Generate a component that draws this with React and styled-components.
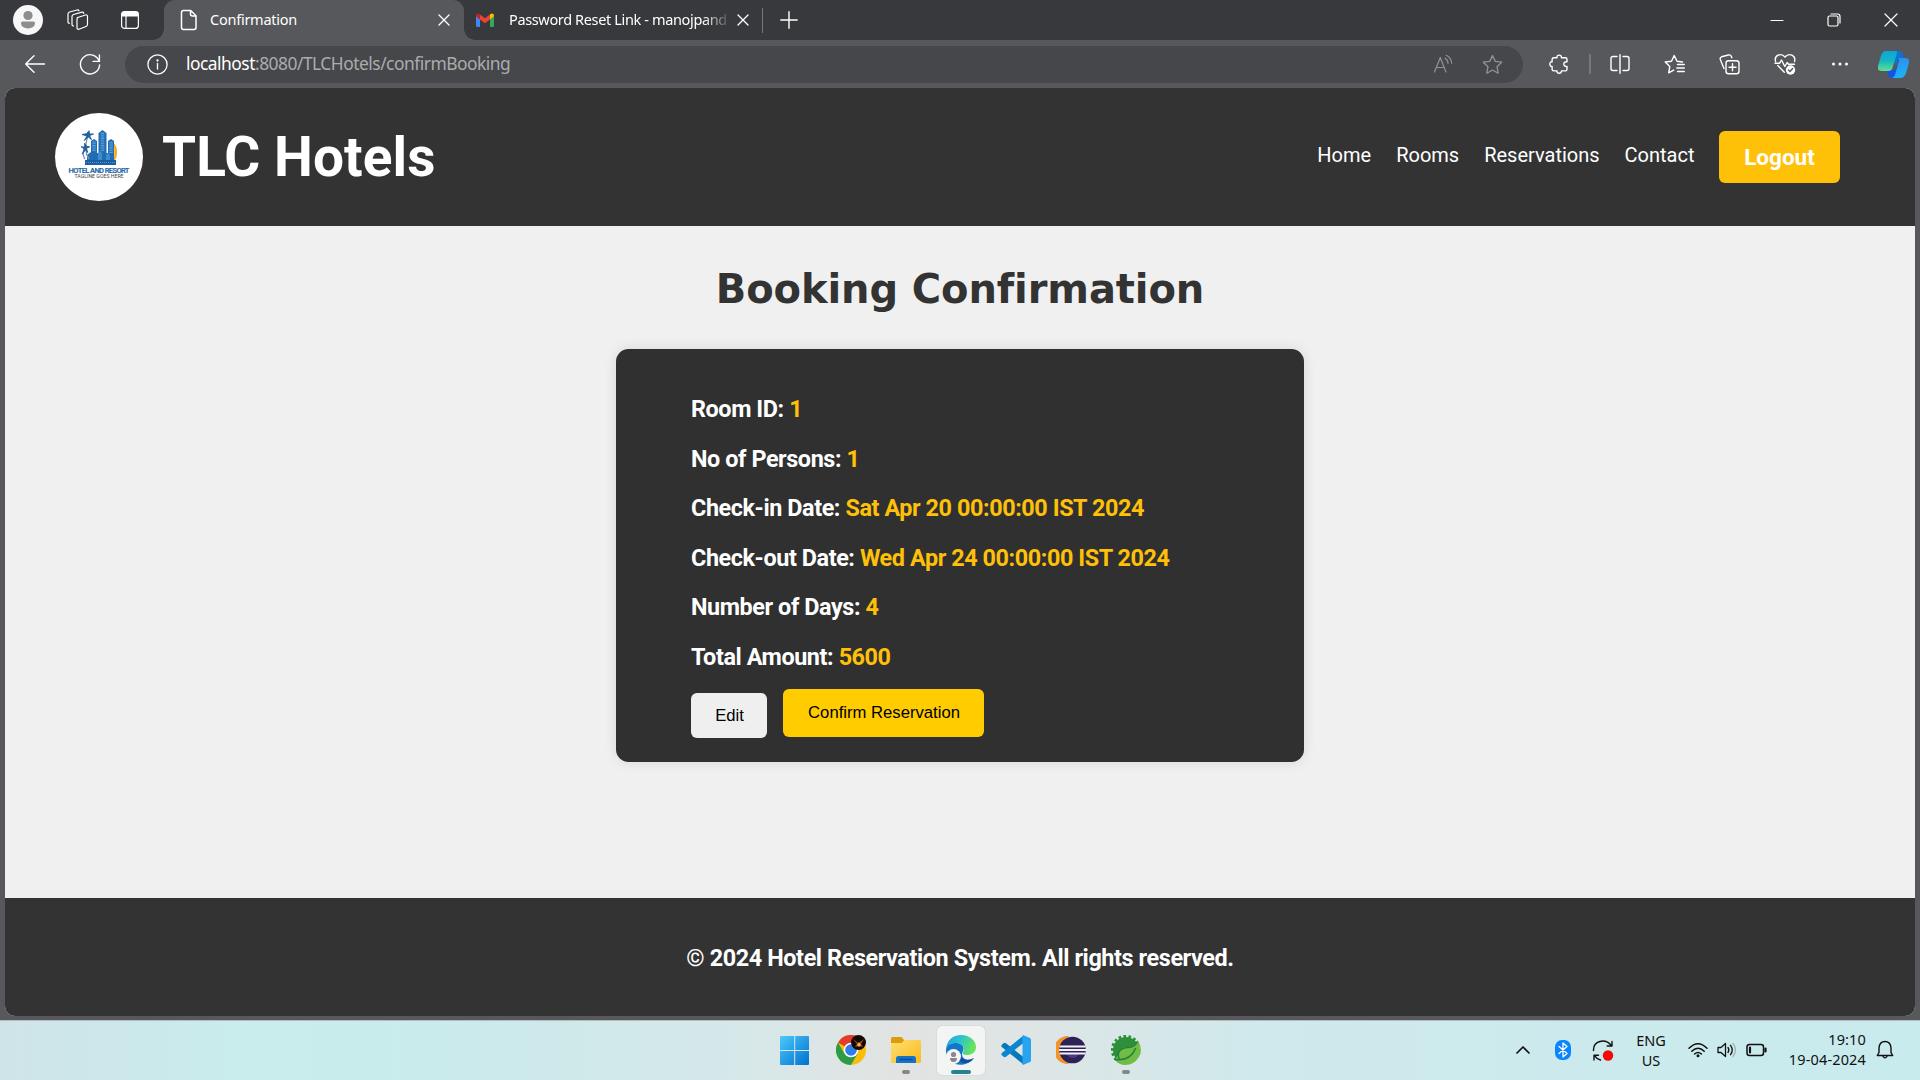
import React from "react";
import styled, { createGlobalStyle, css } from "styled-components";

const ui = `"Noto Sans", "Open Sans", sans-serif`;

const GlobalStyle = createGlobalStyle`
  * { box-sizing: border-box; }
  html, body { margin: 0; padding: 0; background: #57585c; }
  button { font: inherit; border: 0; padding: 0; }
`;

const Screen = styled.div`
  width: 1920px;
  height: 1080px;
  display: flex;
  flex-direction: column;
  overflow: hidden;
  background: #57585c;
  font-family: ${ui};
`;

/* ---------- browser tab strip ---------- */
const TabStrip = styled.div`
  height: 40px;
  flex: none;
  display: flex;
  background: #38393c;
  color: #fff;
`;
const StripTools = styled.div`
  width: 164px;
  display: flex;
  align-items: center;
  padding-left: 13px;
  gap: 24px;
`;
const Tab = styled.div`
  display: flex;
  align-items: center;
  height: 40px;
  font-size: 14.5px;
  letter-spacing: -0.25px;
  ${(p) =>
    p.$active
      ? css`
          width: 300px;
          padding: 0 11px 0 16px;
          background: #57585c;
          border-radius: 11px 11px 0 0;
          position: relative;
          &::before,
          &::after {
            content: "";
            position: absolute;
            bottom: 0;
            width: 11px;
            height: 11px;
          }
          &::before {
            left: -11px;
            background: radial-gradient(circle at 0 0, #38393c 10.5px, #57585c 11px);
          }
          &::after {
            right: -11px;
            background: radial-gradient(circle at 100% 0, #38393c 10.5px, #57585c 11px);
          }
        `
      : css`
          width: 298px;
          padding: 0 10px 0 12px;
        `}
`;
const TabTitle = styled.span`
  flex: 1;
  white-space: nowrap;
  line-height: 24px;
  margin-top: -3px;
  ${(p) =>
    p.$fade &&
    css`
      letter-spacing: -0.36px;
      mask-image: linear-gradient(90deg, #000 86%, transparent 99%);
    `}
`;
const TabIcon = styled.span`
  display: flex;
  width: ${(p) => p.$width}px;
  margin-left: ${(p) => p.$left || 0}px;
  flex: none;
`;
const TabClose = styled.span`
  width: 18px;
  height: 18px;
  display: flex;
  flex: none;
`;
const StripDivider = styled.i`
  width: 1px;
  height: 25px;
  margin: 8px 0 0;
  background: #77787b;
`;
const NewTab = styled.span`
  display: flex;
  align-items: center;
  margin-left: 17px;
`;
const WindowControls = styled.div`
  margin-left: auto;
  display: flex;
  align-items: center;
  gap: 43px;
  padding-right: 22px;
`;

/* ---------- address row ---------- */
const Toolbar = styled.div`
  height: 48px;
  flex: none;
  display: flex;
  align-items: center;
  background: #57585c;
  color: #fff;
`;
const NavButtons = styled.div`
  width: 125px;
  display: flex;
  align-items: center;
  padding-left: 24px;
  gap: 33px;
`;
const AddressBar = styled.div`
  width: 1398px;
  height: 37px;
  display: flex;
  align-items: center;
  padding: 0 20px 0 22px;
  border-radius: 19px;
  background: #46474a;
`;
const Url = styled.div`
  flex: 1;
  margin: -3px 0 0 18px;
  font-size: 17.4px;
  line-height: 26px;
  letter-spacing: -0.5px;
  color: #abacae;
  b { font-weight: 400; color: #fff; }
`;
const AddressActions = styled.div`
  display: flex;
  gap: 28px;
  color: #929395;
`;
const ToolbarActions = styled.div`
  flex: 1;
  display: flex;
  align-items: center;
  padding: 0 11px 0 26px;
`;
const ToolDivider = styled.i`
  width: 2px;
  height: 20px;
  margin: 0 1px 0 20px;
  background: #77787b;
`;
const ToolButton = styled.span`
  width: 55px;
  display: flex;
  justify-content: center;
`;
const CopilotButton = styled.span`
  display: flex;
  margin-left: auto;
`;

/* ---------- hotel page ---------- */
const Viewport = styled.div`
  width: 1910px;
  height: 928px;
  margin: 0 5px;
  flex: none;
  display: flex;
  flex-direction: column;
  overflow: hidden;
  border-radius: 10px;
  background: #f0f0f0;
  font-family: Roboto, sans-serif;
`;
const Header = styled.header`
  height: 138px;
  flex: none;
  display: flex;
  align-items: center;
  padding: 0 75px 0 50px;
  background: #333;
  color: #fff;
`;
const Logo = styled.div`
  width: 88px;
  height: 88px;
  border-radius: 50%;
  background: #fff;
`;
const Brand = styled.h1`
  margin: 0 auto 0 19px;
  font-size: 55px;
  line-height: 64px;
  font-weight: 700;
  letter-spacing: 0.08px;
`;
const Nav = styled.nav`
  display: flex;
  align-items: center;
  gap: 25px;
`;
const NavLink = styled.a`
  font-size: 20px;
  line-height: 24px;
  margin-top: -4px;
`;
const LogoutButton = styled.button`
  width: 121px;
  height: 52px;
  margin-left: -0.5px;
  border-radius: 6px;
  background: #ffc107;
  color: #fff;
  font-size: 22.5px;
  font-weight: 700;
`;
const Main = styled.main`
  height: 672px;
  flex: none;
  display: flex;
  flex-direction: column;
  align-items: center;
  padding-top: 39px;
`;
const PageTitle = styled.h2`
  margin: 0;
  font-family: "DejaVu Sans", Verdana, sans-serif;
  font-size: 40px;
  line-height: 49px;
  font-weight: 700;
  font-variant-ligatures: none;
  letter-spacing: -0.1px;
  color: #333;
`;
const Card = styled.section`
  width: 688px;
  height: 413px;
  margin-top: 35px;
  padding: 36px 75px 0;
  border-radius: 12.5px;
  background: #303030;
  box-shadow: 0 0 13px rgba(0, 0, 0, 0.1);
`;
const Detail = styled.h3`
  margin: 0;
  height: 49.6px;
  font-size: 23.4px;
  line-height: 49.6px;
  font-weight: 700;
  color: #fff;
  white-space: pre;
  letter-spacing: -0.42px;
  span { color: #ffc107; }
`;
const Actions = styled.div`
  display: flex;
  gap: 16px;
  margin-top: 6px;
`;
const ActionButton = styled.button`
  width: ${(p) => (p.$primary ? 201 : 76)}px;
  height: ${(p) => (p.$primary ? 48 : 45)}px;
  margin-top: ${(p) => (p.$primary ? 0 : 4)}px;
  padding: ${(p) => (p.$primary ? "0 0 0 1px" : "1px 0 0 1px")};
  border-radius: 6px;
  background: ${(p) => (p.$primary ? "#ffcc00" : "#efefef")};
  color: #000;
  font-family: "Liberation Sans", Arial, sans-serif;
  font-size: 16.67px;
`;
const Footer = styled.footer`
  flex: 1;
  display: flex;
  align-items: center;
  justify-content: center;
  background: #333;
  color: #fff;
  font-size: 23.4px;
  font-weight: 700;
  letter-spacing: -0.4px;
  padding-top: 2px;
`;

/* ---------- taskbar ---------- */
const Taskbar = styled.div`
  height: 60px;
  margin-top: 4px;
  flex: none;
  display: grid;
  grid-template-columns: 1fr auto 1fr;
  align-items: center;
  border-top: 1px solid #b5babd;
  background: linear-gradient(90deg, #cfe4e8 0, #c9ecec 240px, #c8ecec 380px, #cde9eb 520px, #d6e8e9 740px, #e2e3e2 900px, #dfe5e5 1020px, #cfe9ec 1260px, #c8ebed 100%);
`;
const Apps = styled.div`
  grid-column: 2;
  display: flex;
  gap: 7px;
  margin: 0 -1px 0 1px;
`;
const AppSlot = styled.div`
  width: 48px;
  height: 49px;
  display: flex;
  flex-direction: column;
  align-items: center;
  padding-top: 9px;
  padding-right: ${(p) => p.$nudge || 0}px;
  border-radius: 5px;
  background: ${(p) => (p.$active ? "rgba(255,255,255,.6)" : "transparent")};
  box-shadow: ${(p) => (p.$active ? "0 0 1px rgba(0,0,0,.3)" : "none")};
`;
const Running = styled.i`
  width: ${(p) => (p.$active ? 20 : 8)}px;
  height: 4px;
  margin-top: 5px;
  border-radius: 2px;
  background: ${(p) => (p.$active ? "#27818f" : "#858888")};
`;
const Tray = styled.div`
  justify-self: end;
  display: flex;
  align-items: center;
  padding: 0 26px 1px 0;
  color: #111;
  font-size: 14.5px;
  line-height: 20px;
`;
const Language = styled.div`
  width: 40px;
  margin: -1px 0 0 17px;
  text-align: center;
`;
const Status = styled.div`
  display: flex;
  align-items: center;
  gap: 9px;
  margin-left: 17px;
`;
const Clock = styled.div`
  width: 90px;
  margin: -3px 0 0 9px;
  text-align: right;
  white-space: nowrap;
  letter-spacing: 0.15px;
`;
const TrayItem = styled.span`
  display: flex;
  margin-left: ${(p) => p.$left}px;
`;

/* ---------- drawings ---------- */
const Icon = ({ w = 20, h = w, box = `0 0 ${w} ${h}`, stroke = 1.2, children }) => (
  <svg width={w} height={h} viewBox={box} fill="none" stroke="currentColor" strokeWidth={stroke} strokeLinecap="round" strokeLinejoin="round">
    {children}
  </svg>
);
const CloseIcon = ({ w = 18, a = 4, stroke = 1.3 }) => (
  <Icon w={w} stroke={stroke}><path d={`M${a} ${a} ${w - a} ${w - a}M${w - a} ${a} ${a} ${w - a}`} /></Icon>
);
const ProfileIcon = () => (
  <Icon w={30}><g stroke="none"><circle cx="15" cy="15" r="15" fill="#f7f7f7" /><circle cx="15" cy="10.500" r="4.600" fill="#8d8d8d" /><path d="M9.500 16.500h11q1.500 0 1.500 1.600c0 3.400-3 5.300-7 5.300s-7-1.900-7-5.300q0-1.600 1.500-1.600z" fill="#8d8d8d" /></g></Icon>
);
const WorkspacesIcon = () => (
  <Icon w={22}><path d="m11.500 8.200 7-2.200q2-.5 2 1.500v8q0 1.500-1.500 2l-7 2.700q-2 .5-2-1.500V10q0-1.400 1.500-1.800z" /><path d="M6.500 16.800q-1.500.4-1.500-1.500V7.500q0-1.500 1.500-2l8.500-2.400q1.500-.3 1.700 1.200" /><path d="M2.500 14.200Q1 14.500 1 13V5q0-1.500 1.500-2L10 1q1.500-.4 2 .8" /></Icon>
);
const VerticalTabsIcon = () => (
  <Icon w={20}><rect x="1.600" y="1.600" width="16.800" height="16.800" rx="3" /><path d="M2 3.500Q2 2 3.500 2h13Q18 2 18 3.500V6H2z" fill="#fff" /><path d="M6 6v12" /></Icon>
);
const PageIcon = () => (
  <Icon w={18} h={22} stroke={1.5}><path d="M3.500 1.500h7.200l5.300 5.300v11.700q0 2-2 2H3.500q-2 0-2-2v-15q0-2 2-2zM10.500 1.800V5q0 2 2 2h3.300" /></Icon>
);
const GmailIcon = () => (
  <Icon w={18} h={14}><g stroke="none"><path d="M0 3v9.500Q0 14 1.500 14H4V6z" fill="#4285f4" /><path d="M18 3v9.500q0 1.500-1.500 1.500H14V6z" fill="#34a853" /><path d="M4 1.500 9 5.300l5-3.800v5L9 10.300 4 6.500z" fill="#ea4335" /><path d="M0 3v.3l4 3.200v-5C2.300-.2 0 .3 0 3z" fill="#c5221f" /><path d="M18 3v.3l-4 3.200v-5C15.700-.2 18 .3 18 3z" fill="#fbbc04" /></g></Icon>
);
const BackIcon = () => <Icon w={22} stroke={1.4}><path d="M20.500 11H2M10 2.800 1.700 11l8.300 8.200" /></Icon>;
const ReloadIcon = () => <Icon w={22} stroke={1.4}><path d="M20.200 8.500A9.600 9.600 0 1 0 20.600 12M20.400 2v6.400h-6.300" /></Icon>;
const InfoIcon = () => <Icon w={21} stroke={1.3}><circle cx="10.500" cy="10.500" r="9.600" /><path d="M10.500 9.500v5.500" /><circle cx="10.500" cy="6.500" r=".5" fill="#fff" /></Icon>;
const ReadAloudIcon = () => <Icon w={21}><path d="M1.500 18 7.300 3.500 13 18M3.300 13.500h8M12 4.300q3 1.700 3 5M13.200 1.200q5 2.300 5.500 8" /></Icon>;
const star = "m10.500 1.500 2.800 5.900 6.400.8-4.700 4.500 1.200 6.500-5.700-3.200-5.700 3.200L6 12.700 1.300 8.200l6.400-.8z";
const StarIcon = () => <Icon w={21} stroke={1.3}><path d={star} /></Icon>;
const PuzzleIcon = () => (
  <Icon w={20} stroke={1.4}><path d="M4.800 3.800H8C7.300.2 13 .2 12.400 3.800h3.900q1.700 0 1.700 1.700v2.300c-4.300-.6-4.300 5.200 0 4.600v2.800q0 1.700-1.700 1.700h-3.900c.6 3.100-5.100 3.100-4.400 0H4.800q-1.700 0-1.700-1.700v-2.800C.1 13 .1 7.200 3.100 7.800V5.500q0-1.700 1.700-1.700z" /></Icon>
);
const SplitIcon = () => <Icon w={20} stroke={1.4}><path d="M7 2.500H3q-2 0-2 2v10q0 2 2 2h4M13 2.500h4q2 0 2 2v10q0 2-2 2h-4M10 .8v18.400" /></Icon>;
const FavoritesIcon = () => <Icon w={21} stroke={1.4}><path d="M18.500 8 13 7.300 10.200 1.500 7.500 7.300 1.200 8l4.600 4.400-1.100 6.500 5-2.800M13.500 10.500h6.800M12.800 14h7.500M13.500 17.500h6.800" /></Icon>;
const CollectionsIcon = () => <Icon w={21} stroke={1.4}><rect x="7" y="6.800" width="13" height="13" rx="2.500" /><path d="M13.500 9.800v7M10 13.300h7M5 14.500 1.300 5.500Q.7 3.500 2.500 2.800L9.500 1q2-.5 2.800 1.300l.5 1.500" /></Icon>;
const HeartIcon = () => (
  <Icon w={22} stroke={1.4}><path d="M1.600 8.500C-.2 2.500 7-.8 11 4c4-4.800 11.200-1.500 9.500 4.500M3.800 12.500l6.500 6.700M1 10.300h4.500l2-3.300 3.300 6.500 2.400-4 1.300 1.800h6" /><circle cx="16.500" cy="17" r="4.700" fill="#fff" stroke="none" /><path d="m14.500 17 1.500 1.500 2.600-3" stroke="#57585c" /></Icon>
);
const MoreIcon = () => <Icon w={18}><g fill="currentColor" stroke="none"><circle cx="2.500" cy="9" r="1.500" /><circle cx="9" cy="9" r="1.500" /><circle cx="15.500" cy="9" r="1.500" /></g></Icon>;
const CopilotIcon = () => (
  <Icon w={31} h={28}>
    <defs>
      <linearGradient id="cpA" x1="0" y1="0" x2="0" y2="1"><stop offset="0" stopColor="#0da4dc" /><stop offset=".5" stopColor="#16b7c0" /><stop offset="1" stopColor="#63e08b" /></linearGradient>
      <linearGradient id="cpB" x1="0" y1="0" x2="0" y2="1"><stop offset="0" stopColor="#2e8ff0" /><stop offset="1" stopColor="#18b6fb" /></linearGradient>
    </defs>
    <g stroke="none">
      <path d="M10 1h11q3 0 4 4l1 3h-5l-3 8z" fill="#0b74cf" /><path d="M8 20h9l2-5 3 13h-8q-3 0-4-3z" fill="#1b52e0" />
      <path d="M8 1h9.500q2 0 1.500 2l-4.500 15q-1 3-4 3H4q-5 0-4-5l3-10Q4.500 1 8 1z" fill="url(#cpA)" />
      <path d="M20 8h7q5 0 4 5l-3 10q-1.500 5-6 5h-8q2.500-1 3-3l4-14q.5-2-1-3z" fill="url(#cpB)" />
    </g>
  </Icon>
);
const LogoText = styled.text`
  font-family: "Roboto", sans-serif;
  font-weight: ${(p) => (p.$small ? 400 : 500)};
  font-size: ${(p) => (p.$small ? 5.2 : 7.5)}px;
  letter-spacing: ${(p) => (p.$small ? 0 : -0.6)}px;
`;
const HotelLogo = () => (
  <svg width="88" height="88" viewBox="0 0 88 88">
    <path d="M58 29q4.500 4.500 4 11 0 4-2 7h-3z" fill="#f5a623" /><path d="M58 28q3 8 1 19h-2z" fill="#ffd43b" />
    <path d="M32 51V42l4-3V28l3-2 3 2v12h1.500V20l4-3 4 3v20H53V28l3-2 3 2v23z" fill="#1f6db4" />
    <path d="M39 38V28M47.500 38V19M56 40V28" stroke="#5c9fd8" strokeWidth="3.500" strokeDasharray="1 .7" />
    <path d="M43 48v-8l2-2 2 2v8M51 48v-6l2-2 2 2v6" fill="#3d8ccc" />
    <path d="M30 47h31v5H30z" fill="#1b5ea6" /><path d="M31 49.500h29" stroke="#6ea2d2" strokeWidth=".8" strokeDasharray="1 1" />
    <path d="M34 46q-6-8-1-24M30 46q-3-4-1-10" stroke="#7c95b5" strokeWidth="1.300" fill="none" />
    <path d="m32 23-5-1.500 4.500-.8 2.500-3 .5 3.200 4 .1-4 1.600 2 4-3.300-2.700-4 3.600zM29.500 36l-3.500-2.300 3.500.5.200-4 2 3.400 3 .2-3.300 1.700 1.500 4-2.500-2.400-3.200 4z" fill="#1e5f9f" stroke="#1e5f9f" strokeWidth=".9" />
    <LogoText x="43.700" y="59.500" textAnchor="middle" stroke="#1b64a8" strokeWidth=".2" fill="#1b64a8">HOTEL AND RESORT</LogoText>
    <LogoText $small x="44" y="64.800" textAnchor="middle" fill="#444">TAGLINE GOES HERE</LogoText>
  </svg>
);

const WindowsIcon = () => (
  <Icon w={30}><defs><linearGradient id="win" x1="0" y1="0" x2="1" y2="1"><stop stopColor="#4cc9fb" /><stop offset="1" stopColor="#0070d0" /></linearGradient></defs><path stroke="none" fill="url(#win)" d="M1 1H14.200v14H0V2q0-1 1-1zM15.200 1H28q1 0 1 1v13H15.200zM0 16h14.200v14H1q-1 0-1-1zM15.200 16H29v13q0 1-1 1H15.200z" /></Icon>
);
const ChromeIcon = () => (
  <Icon w={30}><g stroke="none"><circle cx="15" cy="15" r="15" fill="#fbbd0a" /><path d="M15 15 2 7.500A15 15 0 0 1 28 7.500H15z" fill="#e33b2e" /><path d="M2 7.500A15 15 0 0 0 15 30l6.500-11.300L15 15 8.500 18.700z" fill="#2a9d48" /><circle cx="15" cy="15" r="7.300" fill="#fff" /><circle cx="15" cy="15" r="5.800" fill="#2f7de9" /><circle cx="22.500" cy="7.500" r="7.500" fill="#160806" /><path d="m17 4 4 5-2 3 4-1 4 1-2-3 3-5-4 3-1 2-2-2z" fill="#a64a1c" /><path d="m21 10 2-3 2 3-2 2z" fill="#f0b35b" /></g></Icon>
);
const FolderIcon = () => (
  <Icon w={30}><defs><linearGradient id="fold" x1="0" y1="0" x2="1" y2="1"><stop stopColor="#ffdf72" /><stop offset="1" stopColor="#fbb91d" /></linearGradient></defs><g stroke="none"><path d="M0 3.500Q0 2 1.500 2h9L13 5v5H0z" fill="#dc9b08" /><path d="M0 8h10.500L13.500 5H28.500Q30 5 30 6.500V26.500Q30 28 28.500 28h-27Q0 28 0 26.500z" fill="url(#fold)" /><path d="M5 28v-4.500Q5 21 7.500 21h15q2.500 0 2.500 2.500V28z" fill="#1473c8" /><path d="M9 24.500h12" stroke="#0b4f92" strokeWidth="1.300" /></g></Icon>
);
const EdgeIcon = () => (
  <Icon w={31} h={30}>
    <defs><linearGradient id="edA" x1="0" y1="0" x2="1" y2=".3"><stop stopColor="#1da3dc" /><stop offset=".5" stopColor="#2cc3cf" /><stop offset="1" stopColor="#66e45c" /></linearGradient></defs>
    <g stroke="none">
      <path d="M0 16q0-9 10-8c6 0 9 4 7 8-3 6 2 10 9 9-8 9-26 5-26-9z" fill="#1276c9" />
      <path d="M11 18q-1 9 8 10 6 0 9-5-6 3-10 1-4-2-3-6z" fill="#124f9d" />
      <path d="M0 14C1 5 7 0 15 0c9 0 15 6 15 12 0 6-5 8-9 8-3 0-5-1-4-3 3-3 0-8-6-9-6 0-10 2-11 6z" fill="url(#edA)" />
      <circle cx="7.500" cy="21.500" r="7.500" fill="#f5f5f5" /><circle cx="7.500" cy="19.500" r="2.600" fill="#888" /><path d="M4 23h7q0 4-3.500 4T4 23z" fill="#888" />
    </g>
  </Icon>
);
const CodeIcon = () => (
  <Icon w={30}><g stroke="none"><path d="M1 9.500 3 8q1-.5 2 .3L22.500 22v7.500L.8 12q-1-1.200.2-2.500z" fill="#0878bd" /><path d="M1 20.500 3 22q1 .5 2-.3L22.500 8V.5L.8 18q-1 1.200.2 2.500z" fill="#0b86d0" /><path d="M22 0l7 3q1 .5 1 1.500v21q0 1-1 1.500l-7 3q-1-1-.5-2.500v-25Q21.500.5 22 0z" fill="#27a3f0" /></g></Icon>
);
const EclipseIcon = () => (
  <Icon w={30}><g stroke="none"><path d="M12 1.500a13.500 13.500 0 0 0 0 27A16 16 0 0 1 12 1.500z" fill="#f59324" stroke="#f59324" /><circle cx="16.500" cy="15" r="13.300" fill="#2c2255" /><path d="M10 18h13q-2 5-6.500 5T10 18z" fill="#4b3a85" /><path d="M3.500 10.500h26v2h-26zM3 14h27v2H3zM3.500 17.500h26v2h-26z" fill="#f3f1f7" /></g></Icon>
);
const SpringIcon = () => (
  <Icon w={30}>
    <g stroke="none">
      <circle cx="15" cy="15" r="13" fill="#2d8f3a" />
      <path d="M27 9A13.500 13.500 0 1 0 8 26.500" fill="none" stroke="#2d8f3a" strokeWidth="3" strokeLinecap="butt" strokeDasharray="2.600 2.300" />
      <path d="M26.500 5q6 9 1.500 17-5 8-14 8-6 0-10-5 3-4 5-10 3-3 8-3 7-1 9.500-7z" fill="#71bc45" />
      <path d="M26 7q-2 5-9 5.500C9 13 5.500 17.500 8 23.500M4 24.500q15 2 20.500-11" stroke="#22803a" strokeWidth="1.600" fill="none" />
    </g>
  </Icon>
);

const ChevronUp = () => <Icon w={16} stroke={1.7}><path d="m2 11 6-6 6 6" /></Icon>;
const BluetoothIcon = () => <Icon w={16} h={20}><rect width="16" height="20" rx="7" fill="#0a84ff" stroke="none" /><path d="m4 6.500 8 7L8 17V3l4 3.500-8 7" stroke="#fff" strokeWidth="1.300" /></Icon>;
const SyncIcon = () => <Icon w={22} h={21} stroke={1.4}><path d="M1.500 10.500C1 1 13-2.500 19.500 5.800M20 1.500V6h-4.800M2 20v-4.800h4.500M2.500 15.700q2 3.300 6 4.300" /><circle cx="16" cy="15.500" r="5.200" fill="#f60808" stroke="none" /></Icon>;
const WifiIcon = () => <Icon w={20} h={16} stroke={1.5}><path d="M1 6.200q9-9 18 0M3.800 9.200q6.200-6 12.400 0M6.600 12q3.400-3 6.800 0" /><circle cx="10" cy="13.800" r="1.500" fill="currentColor" stroke="none" /></Icon>;
const VolumeIcon = () => <Icon w={20} h={16} stroke={1.3}><path d="M1 5.500h3L8.500 1.500v13L4 10.500H1zM11 5.500q1.800 2.500 0 5M13.500 3.300q3.500 4.700 0 9.400" /><path d="M16 1.500q5 6.500 0 13" opacity=".25" /></Icon>;
const BatteryIcon = () => <Icon w={21} h={14} stroke={1.5}><rect x="1" y="1.500" width="16.500" height="11" rx="2.500" /><path d="M4 4.500v5M19.500 5.500v3" strokeWidth="2.200" /></Icon>;
const BellIcon = () => <Icon w={18} h={20} stroke={1.4}><path d="M3 12.500V8q.5-6.500 6-6.500T15 8v4.500l1.700 3H1.300zM6.800 16q2.200 3.800 4.400 0" /></Icon>;

const details = [
  ["Room ID: ", "1"],
  ["No of Persons: ", "1"],
  ["Check-in Date: ", "Sat Apr 20 00:00:00 IST 2024"],
  ["Check-out Date: ", "Wed Apr 24 00:00:00 IST 2024"],
  ["Number of Days: ", "4"],
  ["Total Amount: ", "5600"],
];
const tools = [
  { id: "split", Art: SplitIcon },
  { id: "favorites", Art: FavoritesIcon },
  { id: "collections", Art: CollectionsIcon },
  { id: "essentials", Art: HeartIcon },
  { id: "more", Art: MoreIcon },
];
const apps = [
  { id: "start", Art: WindowsIcon, nudge: 3 },
  { id: "chrome", Art: ChromeIcon },
  { id: "files", Art: FolderIcon, running: true },
  { id: "edge", Art: EdgeIcon, running: true, active: true },
  { id: "code", Art: CodeIcon },
  { id: "eclipse", Art: EclipseIcon },
  { id: "spring", Art: SpringIcon, running: true },
];

export default function App() {
  return (
    <Screen>
      <GlobalStyle />
      <TabStrip>
        <StripTools>
          <ProfileIcon />
          <WorkspacesIcon />
          <TabIcon $width={20} $left={7}><VerticalTabsIcon /></TabIcon>
        </StripTools>
        <Tab $active>
          <TabIcon $width={30}><PageIcon /></TabIcon>
          <TabTitle>Confirmation</TabTitle>
          <TabClose><CloseIcon /></TabClose>
        </Tab>
        <Tab>
          <TabIcon $width={33}><GmailIcon /></TabIcon>
          <TabTitle $fade>Password Reset Link - manojpand</TabTitle>
          <TabClose><CloseIcon /></TabClose>
        </Tab>
        <StripDivider />
        <NewTab><Icon w={18} stroke={1.4}><path d="M9 .8v16.400M.8 9h16.400" /></Icon></NewTab>
        <WindowControls>
          <Icon w={14}><path d="M1 7.500h12" /></Icon>
          <Icon w={14}><rect x="1" y="3" width="10" height="10" rx="1.500" /><path d="M4 1h6.500Q13 1 13 3.500V10" /></Icon>
          <CloseIcon w={14} a={1} stroke={1.2} />
        </WindowControls>
      </TabStrip>
      <Toolbar>
        <NavButtons><BackIcon /><ReloadIcon /></NavButtons>
        <AddressBar>
          <InfoIcon />
          <Url><b>localhost</b>:8080/TLCHotels/confirmBooking</Url>
          <AddressActions><ReadAloudIcon /><StarIcon /></AddressActions>
        </AddressBar>
        <ToolbarActions>
          <PuzzleIcon />
          <ToolDivider />
          {tools.map(({ id, Art }) => <ToolButton key={id}><Art /></ToolButton>)}
          <CopilotButton><CopilotIcon /></CopilotButton>
        </ToolbarActions>
      </Toolbar>
      <Viewport>
        <Header>
          <Logo><HotelLogo /></Logo>
          <Brand>TLC Hotels</Brand>
          <Nav>
            {["Home", "Rooms", "Reservations", "Contact"].map((t) => <NavLink key={t}>{t}</NavLink>)}
            <LogoutButton>Logout</LogoutButton>
          </Nav>
        </Header>
        <Main>
          <PageTitle>Booking Confirmation</PageTitle>
          <Card>
            {details.map(([label, value]) => (
              <Detail key={label}>{label}<span>{value}</span></Detail>
            ))}
            <Actions>
              <ActionButton>Edit</ActionButton>
              <ActionButton $primary>Confirm Reservation</ActionButton>
            </Actions>
          </Card>
        </Main>
        <Footer>© 2024 Hotel Reservation System. All rights reserved.</Footer>
      </Viewport>
      <Taskbar>
        <Apps>
          {apps.map(({ id, Art, running, active, nudge }) => (
            <AppSlot key={id} $active={active} $nudge={nudge}><Art />{running && <Running $active={active} />}</AppSlot>
          ))}
        </Apps>
        <Tray>
          <ChevronUp />
          <TrayItem $left={24}><BluetoothIcon /></TrayItem>
          <TrayItem $left={21}><SyncIcon /></TrayItem>
          <Language>ENG<br />US</Language>
          <Status><WifiIcon /><VolumeIcon /><BatteryIcon /></Status>
          <Clock>19:10<br />19-04-2024</Clock>
          <TrayItem $left={10}><BellIcon /></TrayItem>
        </Tray>
      </Taskbar>
    </Screen>
  );
}
